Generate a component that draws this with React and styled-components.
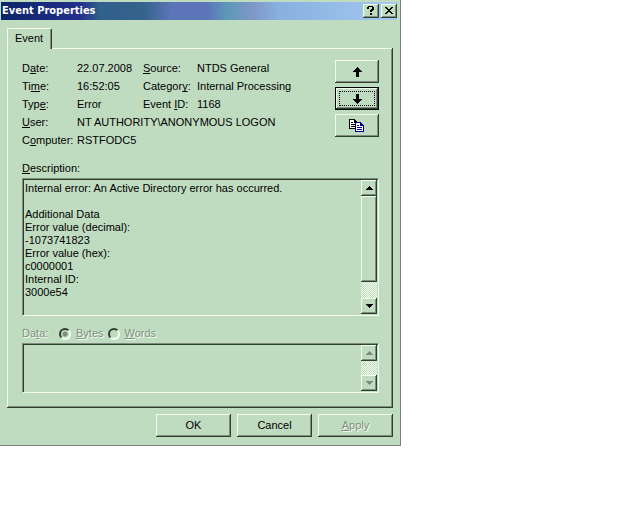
import React, { useState } from 'react'
import styled, { createGlobalStyle, css } from 'styled-components'

const details = [
  'Internal error: An Active Directory error has occurred.',
  '',
  'Additional Data',
  'Error value (decimal):',
  '-1073741823',
  'Error value (hex):',
  'c0000001',
  'Internal ID:',
  '3000e54',
].join('\n')

const Arrow = ({ down }) => (
  <svg width="9" height="10" viewBox="0 0 9 10" shapeRendering="crispEdges" aria-hidden="true">
    <path
      transform={down ? 'rotate(180 4.5 5)' : undefined}
      d="M4 0h1v1h1v1h1v1h1v1h1v1H6v5H3V5H0V4h1V3h1V2h1V1h1z"
    />
  </svg>
)

const Triangle = ({ down }) => (
  <svg width="7" height="4" viewBox="0 0 7 4" shapeRendering="crispEdges" aria-hidden="true">
    <path
      fill="currentColor"
      d={down ? 'M0 0h7v1H6v1H5v1H4v1H3V3H2V2H1V1H0z' : 'M3 0h1v1h1v1h1v1h1v1H0V3h1V2h1V1h1z'}
    />
  </svg>
)

const CopyIcon = () => (
  <svg width="16" height="14" viewBox="0 0 16 14" shapeRendering="crispEdges" aria-hidden="true">
    <path fill="#000" d="M0 0h6v1h1v1h1v1h1v7H0z" />
    <path fill="#fff" d="M1 1h4v3h3v5H1z" />
    <path fill="#000" d="M2 3h2v1H2zM2 5h4v1H2zM2 7h4v1H2z" />
    <path fill="#000080" d="M6 3h6v1h1v1h1v1h1v7H6z" />
    <path fill="#fff" d="M7 4h4v3h3v5H7z" />
    <path fill="#000080" d="M8 6h2v1H8zM8 8h5v1H8zM8 10h5v1H8z" />
  </svg>
)

const Scroll = ({ disabled, thumb }) => (
  <ScrollBar>
    <ScrollButton type="button" aria-label="Scroll up" disabled={disabled}><Triangle /></ScrollButton>
    <Track>{thumb && <Thumb />}</Track>
    <ScrollButton type="button" aria-label="Scroll down" disabled={disabled}><Triangle down /></ScrollButton>
  </ScrollBar>
)

const App = () => {
  const [format, setFormat] = useState('bytes')

  return (
    <>
      <GlobalStyle />
      <Dialog role="dialog" aria-labelledby="title">
        <TitleBar>
          <Title id="title">Event Properties</Title>
          <TitleButton type="button" aria-label="Help">
            <svg width="7" height="9" viewBox="0 0 7 9" shapeRendering="crispEdges">
              <path d="M1 0h5v1h1v3H6v1H5v1H3V4h1V3h1V1H2v2H0V1h1zM3 7h2v2H3z" />
            </svg>
          </TitleButton>
          <TitleButton type="button" aria-label="Close">
            <svg width="8" height="7" viewBox="0 0 8 7" shapeRendering="crispEdges">
              <path d="M0 0h2v1h1v1h2V1h1V0h2v1H7v1H6v1H5v1h1v1h1v1h1v1H6V6H5V5H3v1H2v1H0V6h1V5h1V4h1V3H2V2H1V1H0z" />
            </svg>
          </TitleButton>
        </TitleBar>
        <Body>
          <Tabs role="tablist">
            <Tab type="button" role="tab" aria-selected="true">Event</Tab>
          </Tabs>
          <Panel role="tabpanel">
            <Summary>
              <Fields>
                <dt>D<u>a</u>te:</dt>
                <dd>22.07.2008</dd>
                <dt><u>S</u>ource:</dt>
                <dd>NTDS General</dd>
                <dt>Ti<u>m</u>e:</dt>
                <dd>16:52:05</dd>
                <dt>Categor<u>y</u>:</dt>
                <dd>Internal Processing</dd>
                <dt>Typ<u>e</u>:</dt>
                <dd>Error</dd>
                <dt>Event <u>I</u>D:</dt>
                <dd>1168</dd>
                <dt><u>U</u>ser:</dt>
                <Wide>NT AUTHORITY\ANONYMOUS LOGON</Wide>
                <dt>C<u>o</u>mputer:</dt>
                <Wide>RSTFODC5</Wide>
              </Fields>
              <Actions>
                <ActionButton type="button" aria-label="Previous event"><Arrow /></ActionButton>
                <ActionButton type="button" aria-label="Next event" $focused><Arrow down /></ActionButton>
                <ActionButton type="button" aria-label="Copy"><CopyIcon /></ActionButton>
              </Actions>
            </Summary>
            <Label htmlFor="description"><u>D</u>escription:</Label>
            <Sunken>
              <TextBox id="description" rows={10} readOnly value={details} />
              <Scroll thumb />
            </Sunken>
            <DataRow disabled>
              <label htmlFor="data">Da<u>t</u>a:</label>
              <Option>
                <Radio type="radio" name="format" checked={format === 'bytes'} onChange={() => setFormat('bytes')} />
                <span><u>B</u>ytes</span>
              </Option>
              <Option>
                <Radio type="radio" name="format" checked={format === 'words'} onChange={() => setFormat('words')} />
                <span><u>W</u>ords</span>
              </Option>
            </DataRow>
            <Sunken>
              <TextBox id="data" rows={3} disabled />
              <Scroll disabled />
            </Sunken>
          </Panel>
          <Footer>
            <DialogButton type="button">OK</DialogButton>
            <DialogButton type="button">Cancel</DialogButton>
            <DialogButton type="button" disabled><span><u>A</u>pply</span></DialogButton>
          </Footer>
        </Body>
      </Dialog>
    </>
  )
}

export default App

const face = '#c0dcc0'
const light = '#f4fff0'
const shadow = '#808c80'
const dark = '#304030'

const GlobalStyle = createGlobalStyle`
  * {
    box-sizing: border-box;
  }
  body {
    margin: 0;
    background: #fff;
    color: #000;
    font: 11px/13px "Liberation Sans", Arial, sans-serif;
  }
  button, textarea {
    font: inherit;
    color: inherit;
  }
  u {
    text-underline-offset: 1px;
    text-decoration-thickness: 1px;
    text-decoration-skip-ink: none;
  }
`

const raised = css`
  border: 0;
  background: ${face};
  box-shadow: inset -1px -1px ${dark}, inset 1px 1px ${light}, inset -2px -2px ${shadow};
`

const etched = css`
  color: #808c80;
  text-shadow: 1px 1px ${light};
`

const center = css`
  display: flex;
  align-items: center;
  justify-content: center;
  padding: 0;
`

const Dialog = styled.div`
  width: 100%;
  max-width: 401px;
  padding-top: 2px;
  background: ${face};
  border-right: 1px solid #808080;
  border-bottom: 1px solid #808080;
`

const TitleBar = styled.header`
  display: flex;
  align-items: center;
  height: 18px;
  margin: 0 3px 0 1px;
  background: linear-gradient(
    90deg,
    #0a2468 0%,
    #24308c 20%,
    #30608c 25%,
    #34648c 36%,
    #5c74b8 43%,
    #5c74b8 52%,
    #5c98b8 57%,
    #8098c8 64%,
    #88b0e0 70%,
    #a4c8f0 100%
  );
`

const Title = styled.h1`
  flex: 1;
  margin: 0;
  padding-left: 1px;
  color: #fff;
  font: bold 11px/18px "DejaVu Sans Condensed", "Noto Sans", sans-serif;
`

const TitleButton = styled.button`
  ${raised}
  ${center}
  width: 16px;
  height: 14px;
  padding: 0 1px 1px 0;
  & + & {
    margin-left: 2px;
  }
`

const Body = styled.main`
  padding: 8px 7px;
`

const Tabs = styled.div`
  display: flex;
`

const Tab = styled.button`
  position: relative;
  height: 21px;
  margin-bottom: -1px;
  padding: 0 8px 2px 7px;
  background: ${face};
  border: 1px solid ${light};
  border-right: 1px solid ${dark};
  border-bottom: 0;
  border-radius: 2px 2px 0 0;
  box-shadow: inset -1px 0 ${shadow};
`

const Panel = styled.section`
  ${raised}
  padding: 11px 14px 15px 15px;
`

const Summary = styled.div`
  display: flex;
  justify-content: space-between;
`

const Fields = styled.dl`
  display: grid;
  grid-template-columns: 55px 66px 54px auto;
  grid-auto-rows: 18px;
  margin: 0;
  line-height: 18px;
  white-space: nowrap;
  dd {
    margin: 0;
  }
`

const Wide = styled.dd`
  grid-column: span 3;
`

const Actions = styled.div`
  display: flex;
  flex-direction: column;
  gap: 4px;
  padding-top: 1px;
`

const ActionButton = styled.button`
  ${raised}
  ${center}
  width: 44px;
  height: 23px;
  ${(p) => p.$focused && css`
    border: 1px solid #000;
    outline: 1px dotted #000;
    outline-offset: -5px;
  `}
`

const Label = styled.label`
  display: block;
  margin: 13px 0 3px;
`

const Sunken = styled.div`
  display: flex;
  padding: 1px;
  border: 1px solid;
  border-color: ${shadow} ${light} ${light} ${shadow};
  box-shadow: inset 1px 1px ${dark};
`

const TextBox = styled.textarea`
  flex: 1;
  min-width: 0;
  padding: 2px 1px;
  background: transparent;
  border: 0;
  outline: 0;
  overflow: hidden;
  resize: none;
  &:disabled {
    padding: 4px 1px 3px;
  }
`

const ScrollBar = styled.div`
  display: flex;
  flex-direction: column;
  width: 16px;
`

const ScrollButton = styled.button`
  ${raised}
  ${center}
  height: 16px;
  &:disabled {
    color: ${shadow};
  }
`

const Track = styled.div`
  flex: 1;
  background: repeating-conic-gradient(${light} 0 25%, ${face} 0 50%) 0 0 / 2px 2px;
`

const Thumb = styled.div`
  ${raised}
  height: 84%;
`

const DataRow = styled.fieldset`
  ${etched}
  display: flex;
  align-items: center;
  margin: 11px 0 3px;
  padding: 0;
  border: 0;
  > label:first-child {
    width: 37px;
  }
`

const Option = styled.label`
  display: flex;
  align-items: center;
  gap: 5px;
  margin-right: 4px;
`

const Radio = styled.input`
  appearance: none;
  width: 12px;
  height: 12px;
  margin: 0;
  border: 2px solid;
  border-color: ${dark} ${light} ${light} ${dark};
  border-radius: 50%;
  &:checked {
    background: radial-gradient(circle, ${shadow} 2px, transparent 3px);
  }
`

const Footer = styled.footer`
  display: flex;
  justify-content: flex-end;
  gap: 6px;
  padding-top: 6px;
`

const DialogButton = styled.button`
  ${raised}
  ${center}
  width: 75px;
  height: 23px;
  &:disabled {
    ${etched}
  }
`
